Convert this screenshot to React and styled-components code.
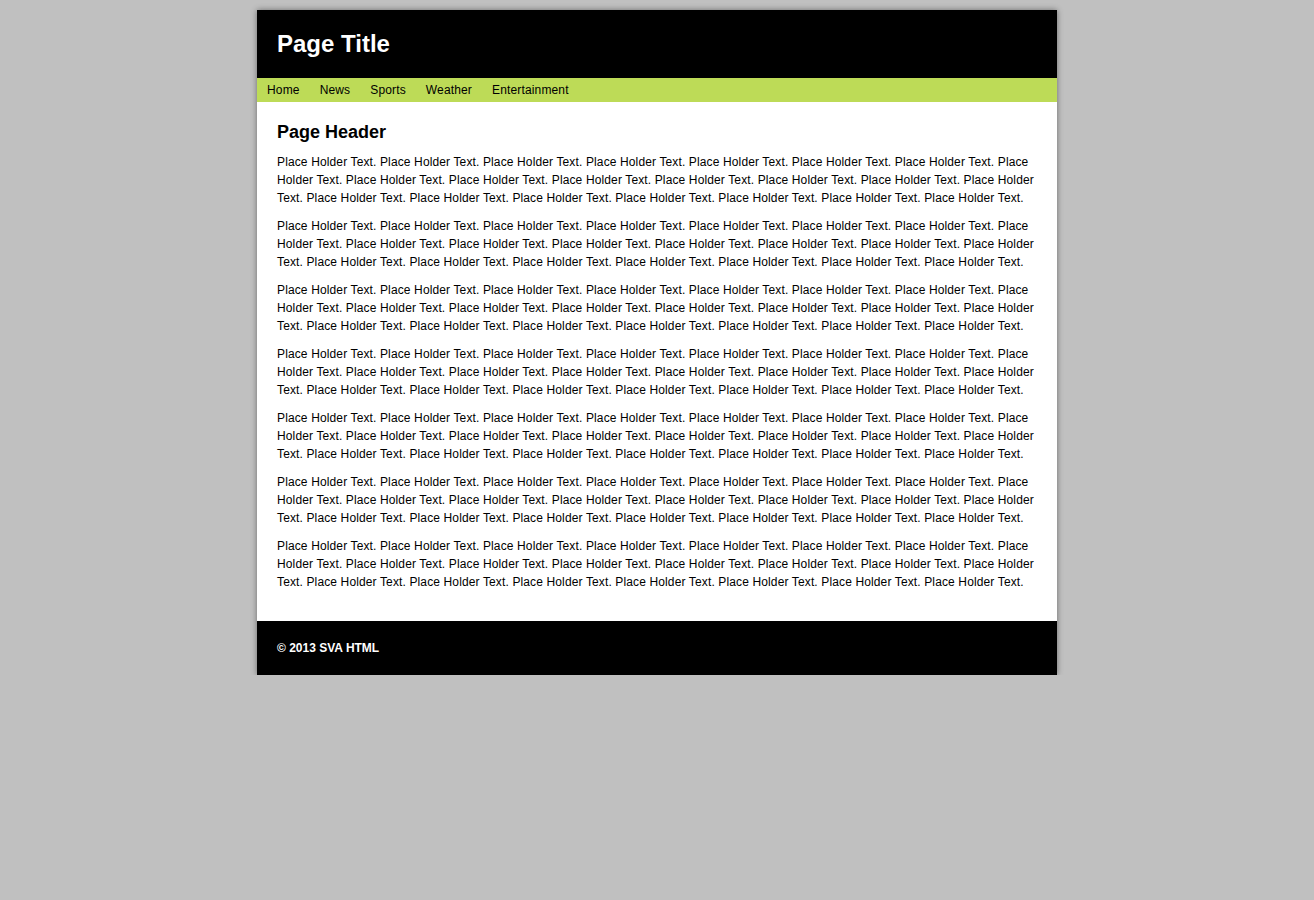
import React from 'react';
import styled, { createGlobalStyle } from 'styled-components';

const GlobalStyle = createGlobalStyle`
  html, body {
    margin: 0;
    padding: 0;
    background-color: #c0c0c0;
  }
  body {
    font-family: "Liberation Sans", Arial, Helvetica, sans-serif;
    padding-top: 10px;
  }
`;

const Wrapper = styled.div`
  width: 800px;
  margin: 0 auto;
  background-color: #fff;
  box-shadow: 0 0 6px rgba(0, 0, 0, 0.45);
`;

const Header = styled.header`
  background-color: #000;
  padding: 20px;
`;

const Title = styled.h1`
  margin: 0;
  color: #fff;
  font-size: 24px;
  line-height: 28px;
  font-weight: bold;
`;

const Nav = styled.nav`
  display: flex;
  gap: 20px;
  background-color: #bddb57;
  padding: 0 10px;
  height: 24px;
  align-items: center;
`;

const NavLink = styled.a`
  color: #000;
  font-size: 12px;
  line-height: 24px;
  letter-spacing: 0.15px;
  text-decoration: none;
`;

const Content = styled.main`
  padding: 19px 20px 20px;
`;

const PageHeader = styled.h2`
  margin: 0 0 10px;
  font-size: 18px;
  line-height: 22px;
  font-weight: bold;
  color: #000;
`;

const Paragraph = styled.p`
  margin: 0 0 10px;
  font-size: 12px;
  line-height: 18px;
  letter-spacing: 0.13px;
  color: #000;
`;

const Footer = styled.footer`
  background-color: #000;
  padding: 20px;
  color: #fff;
  font-size: 12px;
  line-height: 14px;
  font-weight: bold;
`;

const navItems = ['Home', 'News', 'Sports', 'Weather', 'Entertainment'];

const placeholder = Array(22).fill('Place Holder Text.').join(' ');

export default function App() {
  return (
    <>
      <GlobalStyle />
      <Wrapper>
        <Header>
          <Title>Page Title</Title>
        </Header>
        <Nav>
          {navItems.map((item) => (
            <NavLink key={item} href="#">{item}</NavLink>
          ))}
        </Nav>
        <Content>
          <PageHeader>Page Header</PageHeader>
          {Array.from({ length: 7 }).map((_, i) => (
            <Paragraph key={i}>{placeholder}</Paragraph>
          ))}
        </Content>
        <Footer>© 2013 SVA HTML</Footer>
      </Wrapper>
    </>
  );
}
